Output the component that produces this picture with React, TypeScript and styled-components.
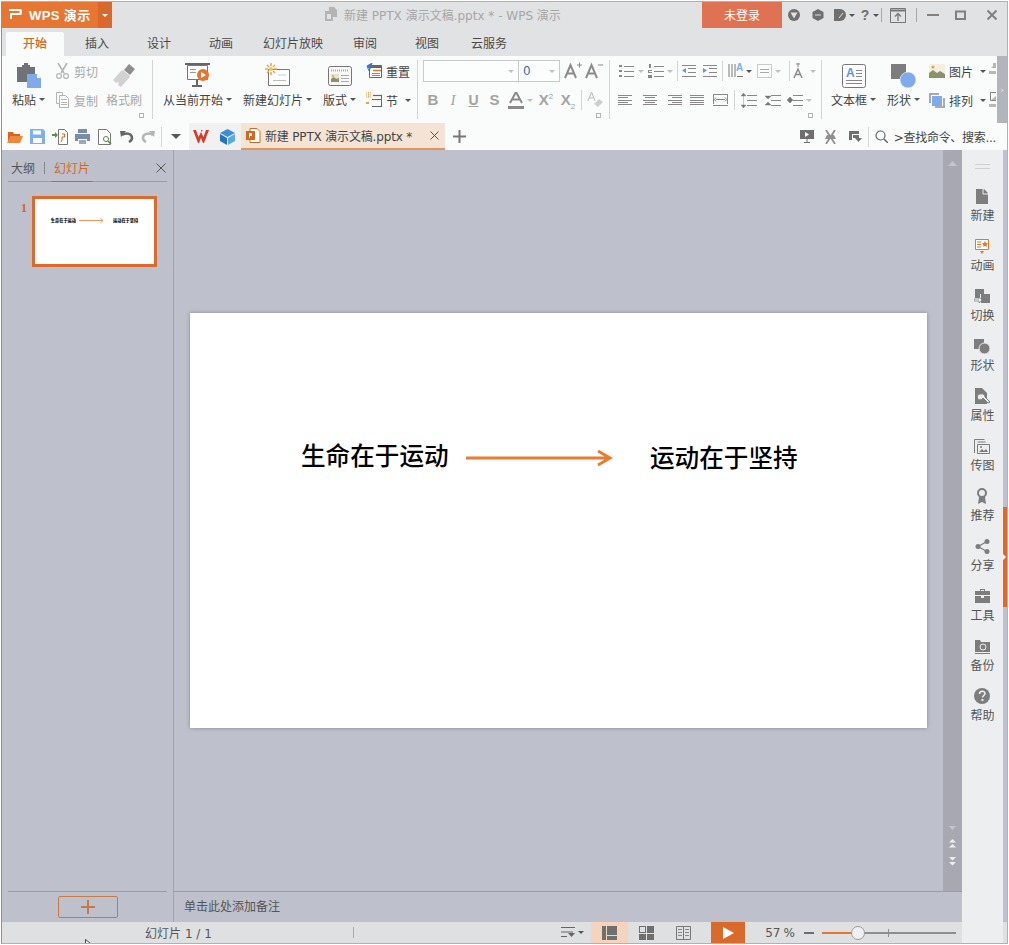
// App.tsx
import React from 'react';
import styled, { createGlobalStyle } from 'styled-components';

const GRAY = '#7d7d7d';
const LIGHT = '#b4b4b4';
const BLUE = '#7fabec';
const ORANGE = '#e5752f';

const Global = createGlobalStyle`
  html, body { margin: 0; padding: 0; background: #fff; }
  body { font-family: "DejaVu Sans", "Noto Sans CJK SC", sans-serif; font-size: 12px; color: #444; }
  svg { display: block; flex: none; }
`;

const Window = styled.div`
  position: relative;
  width: 1007px;
  height: 943px;
  margin: 1px 0 0 1px;
  border: 1px solid #b0b1b3;
  border-left-color: #8f9096;
  box-sizing: border-box;
  display: flex;
  flex-direction: column;
  overflow: hidden;
  background: #e1e2e4;
`;

/* title bar */
const TitleBar = styled.div`
  height: 26px;
  display: flex;
  align-items: stretch;
  flex: none;
`;
const AppButton = styled.div`
  width: 96px;
  background: #e67632;
  color: #fff;
  display: flex;
  align-items: center;
  gap: 6px;
  padding: 0 0 2px 7px;
  box-sizing: border-box;
  font-size: 13px;
  font-weight: 700;
  font-family: "Liberation Sans", "Noto Sans CJK SC", sans-serif;
  letter-spacing: 0.4px;
`;
const AppDrop = styled.div`
  width: 14px;
  background: #d8682b;
  display: flex;
  align-items: center;
  justify-content: center;
`;
const DocTitle = styled.div`
  display: flex;
  align-items: center;
  gap: 6px;
  margin-left: 212px;
  width: 378px;
  padding-bottom: 2px;
  box-sizing: border-box;
  color: #a6a6a6;
  font-size: 12px;
  white-space: nowrap;
`;
const LoginButton = styled.div`
  width: 80px;
  background: #df7252;
  color: #fff;
  display: flex;
  align-items: center;
  justify-content: center;
  padding-bottom: 1px;
  box-sizing: border-box;
  font-size: 12px;
`;
const WinControls = styled.div`
  display: flex;
  align-items: center;
  padding-left: 6px;
`;
const WinSep = styled.div<{ $l: number; $r: number }>`
  width: 1px;
  height: 14px;
  background: #a9a9a9;
  margin: 0 ${p => p.$r}px 0 ${p => p.$l}px;
`;
const HelpMark = styled.span`
  width: 10px;
  text-align: center;
  font-family: "Liberation Sans", sans-serif;
  font-weight: 700;
  font-size: 14px;
  color: #6f6f6f;
`;

/* tabs */
const TabBar = styled.div`
  height: 28px;
  flex: none;
  display: flex;
  align-items: flex-end;
  padding-left: 4px;
`;
const Tab = styled.div<{ $w: number; $active?: boolean }>`
  width: ${p => p.$w}px;
  height: 24px;
  padding-bottom: 3px;
  box-sizing: border-box;
  margin-right: ${p => (p.$active ? 2 : 0)}px;
  display: flex;
  align-items: center;
  justify-content: center;
  color: ${p => (p.$active ? '#d9651f' : '#4a4a4a')};
  font-weight: ${p => (p.$active ? 500 : 400)};
  background: ${p => (p.$active ? '#fafcfb' : 'transparent')};
  border-top-left-radius: 2px;
  border-top-right-radius: 2px;
`;

/* ribbon */
const Ribbon = styled.div`
  height: 67px;
  flex: none;
  background: #fafcfb;
  display: flex;
  align-items: flex-start;
  padding: 4px 0 0 2px;
  box-sizing: border-box;
  position: relative;
`;
const Group = styled.div<{ $w: number }>`
  width: ${p => p.$w}px;
  height: 59px;
  flex: none;
  display: flex;
  box-sizing: border-box;
  position: relative;
  border-right: 1px solid #d3d4d4;
`;
const Launcher = styled.div`
  position: absolute;
  right: 8px;
  bottom: 1px;
  width: 5px;
  height: 5px;
  border: 1px solid #b3b3b3;
  box-sizing: border-box;
`;
const Large = styled.div<{ $w: number }>`
  width: ${p => p.$w}px;
  flex: none;
  display: flex;
  flex-direction: column;
  align-items: center;
  padding-top: 3px;
`;
const LargeIcon = styled.div`
  height: 25px;
  display: flex;
  align-items: center;
`;
const LargeLabel = styled.div<{ $off?: boolean }>`
  margin-top: 2px;
  height: 18px;
  display: flex;
  align-items: center;
  gap: 3px;
  white-space: nowrap;
  color: ${p => (p.$off ? '#a8a8a8' : '#444')};
`;
const SmallColumn = styled.div<{ $w: number; $ml?: number; $clip?: boolean }>`
  width: ${p => p.$w}px;
  margin-left: ${p => p.$ml ?? 0}px;
  flex: none;
  display: flex;
  flex-direction: column;
  gap: 7px;
  overflow: ${p => (p.$clip ? 'hidden' : 'visible')};
`;
const Small = styled.div<{ $off?: boolean }>`
  height: 22px;
  display: flex;
  align-items: center;
  gap: 4px;
  white-space: nowrap;
  color: ${p => (p.$off ? '#a8a8a8' : '#444')};
`;
const Caret = styled.span<{ $off?: boolean; $white?: boolean; $ml?: number; $big?: boolean }>`
  width: 0;
  height: 0;
  flex: none;
  margin-left: ${p => p.$ml ?? 0}px;
  border-left: ${p => (p.$big ? 5 : 3)}px solid transparent;
  border-right: ${p => (p.$big ? 5 : 3)}px solid transparent;
  border-top: ${p => (p.$big ? 5 : 3)}px solid ${p => (p.$white ? '#fff' : p.$off ? '#c0c0c0' : '#555')};
`;
const Stack = styled.div<{ $pl: number }>`
  display: flex;
  flex-direction: column;
  gap: 7px;
  padding-left: ${p => p.$pl}px;
`;
const Row = styled.div`
  height: 22px;
  display: flex;
  align-items: center;
`;
const FontBox = styled.div<{ $w: number; $ml?: number }>`
  width: ${p => p.$w}px;
  height: 22px;
  box-sizing: border-box;
  border: 1px solid #c9c9c9;
  margin-left: ${p => p.$ml ?? 0}px;
  display: flex;
  align-items: center;
  justify-content: flex-end;
  padding-right: 4px;
  background: #fcfdfd;
`;
const BoxValue = styled.span`
  flex: 1;
  padding-left: 4px;
  color: #3f6fa8;
`;
const Glyph = styled.span<{ $w: number; $serif?: boolean; $i?: boolean; $size?: number; $u?: boolean }>`
  width: ${p => p.$w}px;
  flex: none;
  text-align: center;
  font-family: ${p => (p.$serif ? '"Liberation Serif"' : '"Liberation Sans"')}, serif;
  font-weight: ${p => (p.$i ? 400 : 700)};
  font-style: ${p => (p.$i ? 'italic' : 'normal')};
  font-size: ${p => p.$size ?? 14}px;
  text-decoration: ${p => (p.$u ? 'underline' : 'none')};
  color: #a3a3a3;
  line-height: 20px;
  sup, sub { font-size: 8px; line-height: 0; font-weight: 400; }
`;
const ThinSep = styled.div<{ $l: number; $r: number }>`
  width: 1px;
  height: 20px;
  background: #d3d4d4;
  margin: 0 ${p => p.$r}px 0 ${p => p.$l}px;
  flex: none;
`;
const Slot = styled.div<{ $w: number; $ml?: number }>`
  width: ${p => p.$w}px;
  margin-left: ${p => p.$ml ?? 0}px;
  flex: none;
  display: flex;
  justify-content: center;
  align-items: center;
  gap: 3px;
`;
const Spacer = styled.span<{ $w: number }>`
  width: ${p => p.$w}px;
  flex: none;
`;
const CollapseBar = styled.div`
  position: absolute;
  right: 0;
  top: 0;
  bottom: 0;
  width: 10px;
  background: #b3b5bd;
  color: #e9e9ea;
  font-size: 9px;
  display: flex;
  align-items: center;
  justify-content: center;
`;

/* quick bar */
const QuickBar = styled.div`
  height: 27px;
  flex: none;
  background: #fafcfb;
  display: flex;
  align-items: stretch;
  padding-left: 5px;
  position: relative;
`;
const QuickIcons = styled.div`
  width: 154px;
  display: flex;
  align-items: center;
  justify-content: space-between;
  padding-right: 6px;
  box-sizing: border-box;
`;
const QuickSep = styled.div<{ $l?: number; $r?: number }>`
  width: 1px;
  height: 20px;
  align-self: center;
  background: #d5d6d6;
  margin: 0 ${p => p.$r ?? 0}px 0 ${p => p.$l ?? 0}px;
`;
const Mirror = styled.span`
  transform: scaleX(-1);
`;
const DropZone = styled.div`
  width: 27px;
  display: flex;
  align-items: center;
  justify-content: center;
`;
const PinnedTabs = styled.div`
  width: 52px;
  background: #f1f1f1;
  display: flex;
  align-items: center;
  gap: 11px;
  padding-left: 4px;
  box-sizing: border-box;
`;
const DocTab = styled.div`
  width: 204px;
  background: #f5e4d5;
  border-bottom: 2px solid #e9935c;
  box-sizing: border-box;
  display: flex;
  align-items: center;
  padding-left: 5px;
  gap: 4px;
  white-space: nowrap;
  letter-spacing: -0.17px;
  color: #444;
`;
const DocTabClose = styled.span`
  margin-left: auto;
  margin-right: 6px;
`;
const NewTab = styled.div`
  width: 28px;
  display: flex;
  align-items: center;
  justify-content: center;
`;
const QuickRight = styled.div`
  margin-left: auto;
  display: flex;
  align-items: center;
  padding-right: 11px;
  white-space: nowrap;
`;
const SearchText = styled.span`
  margin-left: 6px;
  letter-spacing: -0.3px;
`;

/* main */
const Main = styled.div`
  flex: 1;
  min-height: 0;
  display: flex;
  background: #bec1cb;
  position: relative;
`;
const LeftPanel = styled.div`
  width: 171px;
  flex: none;
  display: flex;
  flex-direction: column;
  border-right: 1px solid #a2a5ad;
  box-sizing: content-box;
`;
const PanelTabs = styled.div`
  height: 32px;
  margin: 0 6px;
  box-sizing: border-box;
  display: flex;
  align-items: center;
  padding-top: 4px;
  border-bottom: 1px solid #9b9da3;
`;
const PanelTab = styled.div<{ $active?: boolean }>`
  height: 100%;
  display: flex;
  align-items: center;
  padding: 0 3px;
  margin-bottom: -1px;
  box-sizing: border-box;
  color: ${p => (p.$active ? '#d9651f' : '#555')};
  border-bottom: 1px solid ${p => (p.$active ? '#d9651f' : 'transparent')};
`;
const PanelDivider = styled.span`
  width: 1px;
  height: 12px;
  margin: 0 6px;
  background: #85878d;
`;
const PanelClose = styled.div`
  margin-left: auto;
  margin-right: 1px;
`;
const ThumbList = styled.div`
  flex: 1;
  padding: 14px 0 0 19px;
  display: flex;
  gap: 6px;
`;
const ThumbNumber = styled.div`
  font-family: "Liberation Serif", serif;
  font-weight: 700;
  font-size: 12px;
  color: #d9651f;
  width: 5px;
  padding-top: 5px;
`;
const Thumb = styled.div`
  width: 125px;
  height: 71px;
  box-sizing: border-box;
  border: 3px solid #dd6a2c;
  background: #fff;
  display: flex;
  align-items: center;
  justify-content: center;
  gap: 3px;
  padding-bottom: 23px;
  font-family: "Noto Sans CJK SC", sans-serif;
  font-size: 4.2px;
  font-weight: 900;
  color: #000;
  white-space: nowrap;
`;
const ThumbRight = styled.span`
  margin-left: 6px;
`;
const AddArea = styled.div`
  height: 31px;
  margin: 0 6px;
  border-top: 1px solid #9b9da3;
  box-sizing: border-box;
  display: flex;
  justify-content: center;
  padding-top: 4px;
`;
const AddButton = styled.div`
  width: 60px;
  height: 22px;
  box-sizing: border-box;
  border: 1px solid #c77a45;
  border-radius: 2px;
  display: flex;
  align-items: center;
  justify-content: center;
`;
const Center = styled.div`
  flex: 1;
  min-width: 0;
  display: flex;
  flex-direction: column;
`;
const EditRow = styled.div`
  flex: 1;
  min-height: 0;
  display: flex;
`;
const Canvas = styled.div`
  flex: 1;
  display: flex;
  align-items: center;
  justify-content: center;
`;
const Slide = styled.div`
  width: 737px;
  height: 415px;
  background: #fff;
  position: relative;
  box-shadow: 0 0 4px rgba(70, 70, 80, 0.45);
`;
const SlideText = styled.div<{ $x: number; $y: number }>`
  position: absolute;
  left: ${p => p.$x}px;
  top: ${p => p.$y}px;
  font-family: "Liberation Serif", "Noto Sans CJK SC", serif;
  font-size: 24.6px;
  line-height: 30px;
  font-weight: 500;
  color: #000;
  white-space: nowrap;
`;
const SlideArrow = styled.div`
  position: absolute;
  left: 276px;
  top: 136px;
`;
const Scrollbar = styled.div`
  width: 19px;
  flex: none;
  background: #a7a8b2;
  display: flex;
  flex-direction: column;
  align-items: center;
  padding: 11px 0 25px;
  box-sizing: border-box;
`;
const ScrollEnd = styled.div`
  margin-top: auto;
  display: flex;
  flex-direction: column;
  align-items: center;
  gap: 9px;
`;
const NotesBar = styled.div`
  height: 31px;
  flex: none;
  border-top: 1px solid #9b9da3;
  box-sizing: border-box;
  display: flex;
  align-items: center;
  padding: 0 0 3px 10px;
  color: #555;
`;

/* right side */
const SideBar = styled.div`
  width: 41px;
  flex: none;
  background: #eceef0;
  display: flex;
  flex-direction: column;
  align-items: center;
  margin-bottom: -22px;
  z-index: 1;
`;
const Grip = styled.div`
  width: 15px;
  height: 3px;
  margin: 14px 0 18px;
  border-top: 1px solid #cfd0d3;
  border-bottom: 1px solid #cfd0d3;
`;
const SideItem = styled.div`
  height: 50px;
  flex: none;
  display: flex;
  flex-direction: column;
  align-items: center;
  color: #555;
  gap: 1px;
`;
const SideIcon = styled.div`
  height: 18px;
  display: flex;
  align-items: center;
`;
const EdgeStrip = styled.div`
  width: 4px;
  flex: none;
  display: flex;
  align-items: center;
`;
const EdgeHandle = styled.div`
  width: 4px;
  height: 100px;
  margin-top: 42px;
  background: #dd6a2c;
  display: flex;
  align-items: center;
`;
const EdgeTick = styled.div`
  width: 0;
  height: 0;
  border-left: 3px solid #fff;
  border-top: 3px solid transparent;
  border-bottom: 3px solid transparent;
`;

/* status */
const StatusBar = styled.div`
  height: 21px;
  flex: none;
  background: #dfe0e2;
  display: flex;
  align-items: stretch;
`;
const SlideCount = styled.div`
  width: 351px;
  display: flex;
  align-items: center;
  justify-content: center;
  padding-left: 2px;
  box-sizing: border-box;
  color: #555;
`;
const StatusSep = styled.div`
  width: 1px;
  height: 11px;
  align-self: center;
  background: #a9a9a9;
`;
const ViewGroup = styled.div`
  margin-left: 207px;
  display: flex;
  align-items: stretch;
`;
const ViewButton = styled.div<{ $w: number; $on?: boolean; $start?: boolean }>`
  width: ${p => p.$w}px;
  display: flex;
  align-items: center;
  justify-content: ${p => (p.$start ? 'flex-start' : 'center')};
  gap: 3px;
  background: ${p => (p.$on ? '#f6d3bd' : 'transparent')};
`;
const PlayButton = styled.div`
  width: 34px;
  margin-left: 9px;
  background: #da6a2c;
  display: flex;
  align-items: center;
  justify-content: center;
`;
const ZoomValue = styled.div`
  width: 59px;
  box-sizing: border-box;
  padding-left: 11px;
  display: flex;
  align-items: center;
  justify-content: center;
  color: #555;
  letter-spacing: -0.3px;
`;
const ZoomControl = styled.div`
  display: flex;
  align-items: center;
`;
const Track = styled.div`
  width: 134px;
  height: 2px;
  margin: 0 6px 0 8px;
  background: #8e8e8e;
  position: relative;
`;
const TrackFill = styled.div`
  height: 100%;
  background: ${ORANGE};
`;
const Knob = styled.div`
  position: absolute;
  top: -6px;
  left: 29px;
  width: 14px;
  height: 14px;
  box-sizing: border-box;
  border: 1px solid #9a9a9a;
  border-radius: 50%;
  background: #eef0f1;
`;
const TrackTick = styled.div`
  position: absolute;
  left: 66px;
  top: -3px;
  width: 1px;
  height: 8px;
  background: #8e8e8e;
`;
const CursorMark = styled.div`
  position: absolute;
  left: 83px;
  bottom: -5px;
  z-index: 3;
`;

/* icons */
type IconProps = { s?: number; w?: number; h?: number; children?: React.ReactNode };
const I: React.FC<IconProps> = ({ s = 16, w, h, children }) => (
  <svg width={w ?? s} height={h ?? s} viewBox={`0 0 ${w ?? s} ${h ?? s}`}>{children}</svg>
);

const Lines = ({ ys, x1, x2, c = GRAY }: { ys: number[]; x1: number; x2: number; c?: string }) => (
  <>{ys.map(y => <path key={y} d={`M${x1} ${y + 0.5}H${x2}`} stroke={c} fill="none" />)}</>
);

const DocIcon = ({ c = LIGHT, s = 14 }: { c?: string; s?: number }) => (
  <I s={s}>
    <path d="M5 0h5l3 3v7H9v4H1V4h4z" fill={c} />
    <path d="M3 7h4v5H3z" fill="#e1e2e4" />
  </I>
);

const Paste = () => (
  <I w={26} h={25}>
    <path d="M1 4h5V2h2V0h4v2h2v2h5v15H1z" fill="#6f7277" />
    <path d="M11 11h10l4 4v10H11z" fill={BLUE} />
    <path d="M21 11l4 4h-4z" fill="#fff" />
  </I>
);
const Cut = () => (
  <I w={15} h={16}>
    <path d="M3 0l6 10M12 0L6 10" stroke={LIGHT} strokeWidth="1.6" fill="none" />
    <circle cx="4" cy="13" r="2.4" stroke={LIGHT} strokeWidth="1.2" fill="none" />
    <circle cx="11" cy="13" r="2.4" stroke={LIGHT} strokeWidth="1.2" fill="none" />
  </I>
);
const Copy = () => (
  <I w={15} h={16}>
    <path d="M1.500 .5h6v3M1.500 .5v11h3" stroke={LIGHT} fill="none" />
    <path d="M4.500 3.500h6l3 3v9h-9z" stroke={LIGHT} fill="#fafcfb" />
    <Lines ys={[7, 10, 12]} x1={6} x2={12} c={LIGHT} />
  </I>
);
const Brush = () => (
  <I w={24} h={24}>
    <path d="M17 0l6 5-5 6-6-5z" fill="#8f8f8f" />
    <path d="M11 6l7 6-1 2-8 9-3-2 1-3-3 1-3-3 8-9z" fill="#d2d2d2" />
  </I>
);
const FromStart = () => (
  <I w={25} h={25}>
    <path d="M0 1h25" stroke="#666" strokeWidth="2" />
    <path d="M2.500 2.500h20v14h-20z" fill="#fff" stroke="#777" />
    <path d="M12 17v5M7 23h10" stroke="#666" strokeWidth="2" fill="none" />
    <Lines ys={[6, 9]} x1={5} x2={11} c="#999" />
    <circle cx="18" cy="12" r="6" fill={ORANGE} />
    <path d="M16 9l5 3-5 3z" fill="#fff" />
  </I>
);
const NewSlide = () => (
  <I w={25} h={25}>
    <path d="M3.500 6.500h21v16h-21z" fill="#fff" stroke="#777" />
    <path d="M8 17.500h13" stroke="#bbb" />
    <path d="M13 12h8" stroke="#ccc" />
    <g stroke="#f2a341" strokeWidth="1.5">
      <path d="M6 0v3M6 9v3M0 6h3M9 6h3M2 2l2 2M8 8l2 2M10 2L8 4M4 8l-2 2" />
    </g>
    <circle cx="6" cy="6" r="2" fill="#f7c24b" />
  </I>
);
const Layout = () => (
  <I w={24} h={20}>
    <rect x=".5" y=".5" width="23" height="19" rx="2" fill="#f8f8f8" stroke="#777" />
    <path d="M3 4.500h18" stroke="#aaa" strokeWidth="2" strokeDasharray="1 1" />
    <path d="M3 8h8v8H3z" fill="#e8e2c8" />
    <path d="M3 16v-3l3-2 2 2 3-1v4z" fill="#8b916f" />
    <circle cx="5" cy="10" r="1" fill="#f0a04a" />
    <Lines ys={[9, 12, 15]} x1={13} x2={21} c="#aaa" />
  </I>
);
const Reset = () => (
  <I w={16} h={16}>
    <path d="M3.500 2.500h12v12h-12z" fill="#fff" stroke="#666" />
    <path d="M3 3h13v2H3z" fill="#666" />
    <path d="M7 7.500h8" stroke={ORANGE} strokeWidth="1.500" />
    <Lines ys={[10, 12]} x1={6} x2={14} c="#888" />
    <path d="M6 0L1 3l3 3zM1 3l2 5" fill="#3d78c7" stroke="#3d78c7" />
  </I>
);
const Section = () => (
  <I w={16} h={16}>
    <path d="M0 1h5M0 3h5M0 5h5M2.500 0v6" stroke="#f0a04a" strokeDasharray="1 1" />
    <path d="M6 7.500h10M6 14.500h10" stroke="#666" strokeWidth="1.200" />
    <path d="M15.500 3v12" stroke="#666" />
    <path d="M7 3.500h9" stroke="#666" strokeWidth="1.200" />
    <path d="M0 10h3v2H0z" fill="#f0a04a" />
  </I>
);
const AUp = ({ sign }: { sign: string }) => (
  <I w={18} h={18}>
    <path d="M1 16L6.500 3 12 16M3.500 11.500h6" stroke="#8a8a8a" strokeWidth="2" fill="none" />
    <path d={sign} stroke="#8a8a8a" fill="none" />
  </I>
);
const ColorA = () => (
  <I w={16} h={17}>
    <path d="M2 11L8 0l6 11M4 7.500h8" stroke="#8a8a8a" strokeWidth="2" fill="none" />
    <path d="M0 14h16v3H0z" fill="#8a8a8a" />
  </I>
);
const Erase = () => (
  <I w={17} h={18}>
    <path d="M1 10L4.500 1 8 10M2.500 7h4" stroke="#b8b8b8" fill="none" />
    <path d="M7 13l5-5 4 3-5 5z" fill="#cfcfcf" />
  </I>
);
const Bullets = () => (
  <I w={16} h={14}>
    <Lines ys={[2, 7, 12]} x1={5} x2={15} c="#888" />
    <path d="M0 1h3v2H0zM0 6h3v2H0zM0 11h3v2H0z" fill="#888" />
  </I>
);
const Numbers = () => (
  <I w={16} h={14}>
    <Lines ys={[2, 7, 12]} x1={6} x2={16} c="#888" />
    <path d="M1 0h2v4H1zM0 6h4v1H1v1h3v1H0zM0 11h4v3H0z" fill="#888" />
  </I>
);
const Indent = ({ flip }: { flip?: boolean }) => (
  <I w={14} h={14}>
    <Lines ys={[1, 12]} x1={0} x2={14} c="#888" />
    <Lines ys={[4, 8]} x1={6} x2={14} c="#888" />
    <path d={flip ? 'M0 4l4 2.500L0 9z' : 'M4 4L0 6.500 4 9z'} fill="#6f93c8" />
  </I>
);
const Columns = () => (
  <I w={15} h={16}>
    <path d="M1 1v13M4 1v13M7 1v13" stroke="#777" fill="none" />
    <text x="8" y="8" fontSize="10" fontWeight="700" fill={BLUE} fontFamily="Liberation Sans">A</text>
    <Lines ys={[13]} x1={9} x2={15} c="#777" />
  </I>
);
const Dotted = () => (
  <I w={15} h={14}>
    <path d="M.5 .5h14v13H.5z" stroke="#999" strokeDasharray="1 1" fill="none" />
    <Lines ys={[5, 8]} x1={3} x2={12} c="#aaa" />
  </I>
);
const TextDir = () => (
  <I w={14} h={16}>
    <path d="M1 15L5 6l4 9M2.500 11.500h5" stroke="#888" strokeWidth="1.400" fill="none" />
    <path d="M3 1h4M5 0v4" stroke="#888" />
  </I>
);
const Align = ({ kind }: { kind: 'l' | 'c' | 'r' | 'j' }) => {
  const short = kind === 'j' ? [0, 14] : kind === 'l' ? [0, 10] : kind === 'c' ? [2, 12] : [4, 14];
  return (
    <I w={14} h={12}>
      <Lines ys={[1, 6, 10]} x1={0} x2={14} c="#888" />
      <Lines ys={[3, 8]} x1={short[0]} x2={short[1]} c="#888" />
    </I>
  );
};
const Distributed = () => (
  <I w={15} h={12}>
    <Lines ys={[0, 11]} x1={0} x2={15} c="#888" />
    <path d="M.5 1v9M14.500 1v9M3 5.500h9" stroke="#888" fill="none" />
    <path d="M3 3.500L1.500 5.500 3 7.500M12 3.500l1.500 2-1.500 2" stroke="#888" fill="none" />
  </I>
);
const LineSpace = ({ dir }: { dir: number }) => (
  <I w={16} h={15}>
    <Lines ys={[2, 7, 12]} x1={6} x2={16} c="#888" />
    <path d={dir === 1 ? 'M2.500 0L0 3h5zM2.500 15L0 12h5zM2.500 3v9' : dir === 2 ? 'M3 6L0 3h6zM3 9l-3 3h6z' : 'M0 7l3-3v6zM6 7L3 4v6z'} fill="#777" stroke="#777" strokeWidth=".4" />
  </I>
);
const TextBox = () => (
  <I w={24} h={24}>
    <rect x=".5" y=".5" width="23" height="23" rx="2" fill="#fff" stroke="#777" />
    <text x="4" y="13" fontSize="12" fontWeight="700" fill="#5d92e2" fontFamily="Liberation Sans">A</text>
    <Lines ys={[6, 9, 12]} x1={14} x2={20} c="#888" />
    <Lines ys={[16, 19]} x1={4} x2={20} c="#888" />
  </I>
);
const Shape = () => (
  <I w={25} h={24}>
    <path d="M0 0h15v15H0z" fill="#7d7d7d" />
    <circle cx="17" cy="16" r="8" fill={BLUE} stroke="#fafcfb" strokeWidth=".6" />
  </I>
);
const Picture = () => (
  <I w={16} h={14}>
    <path d="M0 0h16v14H0z" fill="#f3f0e3" />
    <path d="M0 14V9l4-3 4 3 3-2 5 3v4z" fill="#8b916f" />
    <circle cx="4" cy="3" r="1.600" fill="#f0a04a" />
  </I>
);
const Arrange = () => (
  <I w={16} h={15}>
    <path d="M0 0h10v2H2v8H0z" fill="#aaa" />
    <path d="M3 3h10v10H3z" fill={BLUE} />
    <path d="M14 5h2v10H6v-2h8z" fill="#aaa" />
  </I>
);
const ClippedTop = () => (
  <I w={8} h={16}>
    <path d="M4 0h3v5H2l2-2zM0 8h7v3H0z" fill="#b8b8b8" />
  </I>
);
const ClippedBottom = () => (
  <I w={8} h={16}>
    <path d="M1.500 .5h6v8h-6z" fill="none" stroke="#888" />
    <path d="M2 8l5-4v4zM0 12h7v3H0z" fill="#b8b8b8" />
  </I>
);

const OpenIcon = () => (
  <I w={16} h={14}>
    <path d="M1 2h5l1 2h6v2H4L1 12z" fill="#d9651f" />
    <path d="M4 6h12l-3 7H0z" fill="#f0883a" />
  </I>
);
const SaveIcon = () => (
  <I w={15} h={15}>
    <path d="M0 0h13l2 2v13H0z" fill="#7fb0ee" />
    <path d="M3 1.500h8v4H3zM3 9h9v5H3z" fill="#fafcfb" />
  </I>
);
const SaveAs = () => (
  <I w={16} h={16}>
    <path d="M6.500 .5h6l3 3v12h-9z" fill="#fff" stroke="#777" />
    <path d="M10 5h2.500v3H10v3l-1 2" stroke="#d9651f" fill="none" />
    <path d="M0 5h3V3l3 3-3 3V7H0z" fill="#5e8f3e" />
  </I>
);
const Printer = () => (
  <I w={15} h={15}>
    <path d="M3 0h9v4H3z" fill="#7a8cae" />
    <path d="M0 5h15v7h-3v-2H3v2H0z" fill="#7a8cae" />
    <path d="M4 11h7v4H4z" fill="#9aa7c0" />
  </I>
);
const Preview = () => (
  <I w={15} h={16}>
    <path d="M.5 .5h8l4 4v11H.5z" fill="#fff" stroke="#777" />
    <circle cx="8" cy="10" r="2.500" fill="#fff" stroke="#4f8a3b" />
    <path d="M10 12l3 3" stroke="#4f8a3b" strokeWidth="1.500" />
  </I>
);
const Undo = ({ off }: { off?: boolean }) => (
  <I w={14} h={13}>
    <path d="M2 5c5-3 10-1 10 3 0 2-1 3-3 4" stroke={off ? '#b5b5b5' : '#666'} strokeWidth="2.500" fill="none" />
    <path d="M0 1l6 0-5 6z" fill={off ? '#b5b5b5' : '#666'} />
  </I>
);
const WpsLogo = () => (
  <I w={16} h={13}>
    <path d="M0 0h3l2.500 7L8 2l2.500 5L13 0h3l-5 13H10L8 8l-2 5H5zM8 0l2 0-2 2z" fill="#cf3f2a" />
  </I>
);
const Cube = () => (
  <I w={15} h={16}>
    <path d="M7.500 0L15 4l-7.500 4L0 4z" fill="#3f8fd6" />
    <path d="M0 5l7 4v7l-7-4z" fill="#2672bd" />
    <path d="M15 5L8 9v7l7-4z" fill="#5aa8e4" />
  </I>
);
const PptTab = () => (
  <I w={15} h={15}>
    <path d="M4 .5h7l3 3v11H4z" fill="#fff" stroke="#c96a2a" />
    <path d="M0 3h9v9H0z" fill="#d9651f" />
    <path d="M3 5h3v3H4v2H3z" fill="#fff" />
  </I>
);
const Cross = ({ s = 9, c = '#555', sw = 1 }: { s?: number; c?: string; sw?: number }) => (
  <I s={s}>
    <path d={`M.5 .5L${s - 0.5} ${s - 0.5}M${s - 0.5} .5L.5 ${s - 0.5}`} stroke={c} strokeWidth={sw} />
  </I>
);
const Plus = ({ s = 13, c = '#777', sw = 2 }: { s?: number; c?: string; sw?: number }) => (
  <I s={s}>
    <path d={`M${s / 2} 0V${s}M0 ${s / 2}H${s}`} stroke={c} strokeWidth={sw} />
  </I>
);
const Search = () => (
  <I s={13}>
    <circle cx="5.500" cy="5.500" r="4.500" fill="none" stroke="#666" strokeWidth="1.200" />
    <path d="M9 9l4 4" stroke="#666" strokeWidth="1.500" />
  </I>
);

const sideIcons: Record<string, React.ReactNode> = {
  新建: <I w={12} h={15}><path d="M0 0h7l5 5v10H0z" fill={GRAY} /><path d="M8 0l4 4H8z" fill={GRAY} /><path d="M7 0v5h5" stroke="#eceef0" fill="none" /></I>,
  动画: <I w={14} h={15}><path d="M.5 .5h13v10H.5z" fill="#fff" stroke="#e5752f" /><path d="M2 3h4M2 5.500h4M2 8h4" stroke="#e5752f" /><path d="M10 2l1 2 2 .5-1.500 1.500.3 2L10 7l-1.800 1 .3-2L7 4.500 9 4z" fill="#e5752f" /><path d="M5 12h4l-2 3z" fill="#e5752f" /></I>,
  切换: <I w={16} h={15}><path d="M1 0h9v5H6v4H1z" fill={GRAY} /><path d="M7 5h9v9H7z" fill={GRAY} /><path d="M0 10h5V8l3 3-3 3v-2H0z" fill="#eceef0" stroke={GRAY} strokeWidth=".7" /></I>,
  形状: <I w={16} h={15}><path d="M0 0h10v10H0z" fill={GRAY} /><circle cx="10.500" cy="9.500" r="5.500" fill={GRAY} stroke="#eceef0" /></I>,
  属性: <I w={15} h={16}><path d="M0 0h7l5 5v11H0z" fill={GRAY} /><path d="M6 6a3 3 0 1 0 2 4l5 5 2-1-5-5a3 3 0 0 0-4-3z" fill="#eceef0" stroke={GRAY} /></I>,
  传图: <I w={16} h={15}><path d="M.5 14V.5h10" stroke={GRAY} fill="none" /><path d="M3.500 5.500h12v9h-12zM3.500 3h8" stroke={GRAY} fill="none" /><path d="M5 13l3-3 2 2 2-2 2 3z" fill={GRAY} /><circle cx="7" cy="8" r="1" fill={GRAY} /></I>,
  推荐: <I w={12} h={16}><circle cx="6" cy="5" r="4" fill="none" stroke={GRAY} strokeWidth="2" /><path d="M3 9l-1 7 4-2 4 2-1-7" fill={GRAY} /></I>,
  分享: <I w={15} h={15}><circle cx="12" cy="2.500" r="2.500" fill={GRAY} /><circle cx="12" cy="12.500" r="2.500" fill={GRAY} /><circle cx="3" cy="7.500" r="2.500" fill={GRAY} /><path d="M12 2.500L3 7.500l9 5" stroke={GRAY} strokeWidth="1.200" fill="none" /></I>,
  工具: <I w={15} h={14}><path d="M5 2V0h5v2h5v4H0V2zM6 1v1h3V1z" fill={GRAY} fillRule="evenodd" /><path d="M0 7h6v2h3V7h6v7H0z" fill={GRAY} /></I>,
  备份: <I w={15} h={15}><path d="M0 1h5l1 2h9v10H0z" fill={GRAY} /><circle cx="8" cy="8" r="3" fill="none" stroke="#eceef0" /><path d="M0 14.500h15" stroke={GRAY} /></I>,
  帮助: <I s={16}><circle cx="8" cy="8" r="8" fill={GRAY} /><path d="M5.500 6c0-3.500 5.500-3.500 5.500-.5 0 2-2.500 2-2.500 4" stroke="#eceef0" strokeWidth="1.600" fill="none" /><path d="M7.500 11h2v2h-2z" fill="#eceef0" /></I>,
};

const sideLabels = ['新建', '动画', '切换', '形状', '属性', '传图', '推荐', '分享', '工具', '备份', '帮助'];

const App: React.FC = () => (
  <>
    <Global />
    <Window>
      <TitleBar>
        <AppButton>
          <I w={14} h={12}><path d="M0 1h11a2 2 0 0 1 2 2v2a2 2 0 0 1-2 2H3v4H1V5h9.500V3H0z" fill="#fff" /></I>
          WPS 演示
        </AppButton>
        <AppDrop><Caret $white /></AppDrop>
        <DocTitle><DocIcon />新建 PPTX 演示文稿.pptx * - WPS 演示</DocTitle>
        <LoginButton>未登录</LoginButton>
        <WinControls>
          <Slot $w={12}><I s={12}><circle cx="6" cy="6" r="6" fill="#6f6f6f" /><path d="M2.500 3.500h7L6 9.500z" fill="#e1e2e4" /></I></Slot>
          <Slot $w={12} $ml={12}><I s={12}><path d="M6 0l5.500 3v6L6 12 .5 9V3z" fill="#6f6f6f" /><path d="M3 6h6" stroke="#e1e2e4" /></I></Slot>
          <Slot $w={20} $ml={10}><I s={12}><path d="M0 0h6a6 6 0 0 1 0 12H0z" fill="#6f6f6f" /><path d="M5 9l4-5" stroke="#e1e2e4" /></I><Caret /></Slot>
          <Slot $w={19} $ml={6}><HelpMark>?</HelpMark><Caret /></Slot>
          <WinSep $l={2} $r={8} />
          <I w={16} h={15}><path d="M.5 .5h15v14H.5z" fill="none" stroke="#777" /><path d="M0 2.500h16" stroke="#777" strokeWidth="2" /><path d="M8 13V6M5 8.500L8 5.500l3 3" stroke="#777" fill="none" strokeWidth="1.300" /></I>
          <WinSep $l={10} $r={10} />
          <Slot $w={12}><I w={12} h={3}><path d="M0 0h12v2H0z" fill="#808080" /></I></Slot>
          <Slot $w={11} $ml={16}><I w={11} h={10}><path d="M1 1.500h9v7.500H1z" fill="none" stroke="#808080" strokeWidth="2" /></I></Slot>
          <Slot $w={10} $ml={21}><Cross s={10} c="#808080" sw={2} /></Slot>
        </WinControls>
      </TitleBar>

      <TabBar>
        <Tab $w={58} $active>开始</Tab>
        <Tab $w={62}>插入</Tab>
        <Tab $w={62}>设计</Tab>
        <Tab $w={62}>动画</Tab>
        <Tab $w={82}>幻灯片放映</Tab>
        <Tab $w={62}>审阅</Tab>
        <Tab $w={62}>视图</Tab>
        <Tab $w={62}>云服务</Tab>
      </TabBar>

      <Ribbon>
        <Group $w={149}>
          <Large $w={49}>
            <LargeIcon><Paste /></LargeIcon>
            <LargeLabel>粘贴<Caret /></LargeLabel>
          </Large>
          <SmallColumn $w={49} $ml={2}>
            <Small $off><Cut />剪切</Small>
            <Small $off><Copy />复制</Small>
          </SmallColumn>
          <Large $w={40}>
            <LargeIcon><Brush /></LargeIcon>
            <LargeLabel $off>格式刷</LargeLabel>
          </Large>
          <Launcher />
        </Group>

        <Large $w={89}>
          <LargeIcon><FromStart /></LargeIcon>
          <LargeLabel>从当前开始<Caret /></LargeLabel>
        </Large>
        <Large $w={71}>
          <LargeIcon><NewSlide /></LargeIcon>
          <LargeLabel>新建幻灯片<Caret /></LargeLabel>
        </Large>
        <Large $w={53}>
          <LargeIcon><Layout /></LargeIcon>
          <LargeLabel>版式<Caret /></LargeLabel>
        </Large>
        <Group $w={52}>
          <SmallColumn $w={50}>
            <Small><Reset />重置</Small>
            <Small><Section />节<Caret $ml={3} /></Small>
          </SmallColumn>
        </Group>

        <Group $w={192}>
          <Stack $pl={5}>
            <Row>
              <FontBox $w={96}><Caret $off /></FontBox>
              <FontBox $w={42} $ml={-1}><BoxValue>0</BoxValue><Caret $off /></FontBox>
              <Slot $w={25}><AUp sign="M13 3h5M15.500 .5v5" /></Slot>
              <Slot $w={17}><AUp sign="M13 3h5" /></Slot>
            </Row>
            <Row>
              <Glyph $w={20} $size={15}>B</Glyph>
              <Glyph $w={20} $size={15} $serif $i>I</Glyph>
              <Glyph $w={21} $size={14} $u>U</Glyph>
              <Glyph $w={21} $size={15}>S</Glyph>
              <Slot $w={30}><ColorA /><Caret $off /></Slot>
              <Glyph $w={22} $size={15}>X<sup>2</sup></Glyph>
              <Glyph $w={22} $size={15}>X<sub>2</sub></Glyph>
              <ThinSep $l={2} $r={2} />
              <Slot $w={22}><Erase /></Slot>
            </Row>
          </Stack>
          <Launcher />
        </Group>

        <Group $w={212}>
          <Stack $pl={8}>
            <Row>
              <Slot $w={26}><Bullets /><Caret $off /></Slot>
              <Slot $w={26} $ml={3}><Numbers /><Caret $off /></Slot>
              <ThinSep $l={4} $r={4} />
              <Slot $w={14}><Indent /></Slot>
              <Slot $w={14} $ml={7}><Indent flip /></Slot>
              <ThinSep $l={5} $r={5} />
              <Slot $w={24}><Columns /><Caret /></Slot>
              <Slot $w={24} $ml={5}><Dotted /><Caret $off /></Slot>
              <ThinSep $l={8} $r={3} />
              <Slot $w={23}><TextDir /><Caret $off /></Slot>
            </Row>
            <Row>
              <Align kind="l" />
              <Spacer $w={11} />
              <Align kind="c" />
              <Spacer $w={11} />
              <Align kind="r" />
              <Spacer $w={8} />
              <Align kind="j" />
              <Spacer $w={9} />
              <Distributed />
              <ThinSep $l={6} $r={6} />
              <LineSpace dir={1} />
              <Spacer $w={8} />
              <LineSpace dir={2} />
              <Spacer $w={6} />
              <LineSpace dir={3} />
              <Caret $off $ml={3} />
            </Row>
          </Stack>
          <Launcher />
        </Group>

        <Large $w={63}>
          <LargeIcon><TextBox /></LargeIcon>
          <LargeLabel>文本框<Caret /></LargeLabel>
        </Large>
        <Large $w={37}>
          <LargeIcon><Shape /></LargeIcon>
          <LargeLabel>形状<Caret /></LargeLabel>
        </Large>
        <SmallColumn $w={60} $ml={7}>
          <Small><Picture />图片<Caret $ml={3} /></Small>
          <Small><Arrange />排列<Caret $ml={3} /></Small>
        </SmallColumn>
        <SmallColumn $w={7} $clip>
          <Small><ClippedTop /></Small>
          <Small><ClippedBottom /></Small>
        </SmallColumn>
        <CollapseBar>›</CollapseBar>
      </Ribbon>

      <QuickBar>
        <QuickIcons>
          <OpenIcon />
          <SaveIcon />
          <SaveAs />
          <Printer />
          <Preview />
          <Undo />
          <Mirror><Undo off /></Mirror>
        </QuickIcons>
        <QuickSep />
        <DropZone><Caret $big /></DropZone>
        <PinnedTabs><WpsLogo /><Cube /></PinnedTabs>
        <DocTab>
          <PptTab />
          新建 PPTX 演示文稿.pptx *
          <DocTabClose><Cross /></DocTabClose>
        </DocTab>
        <NewTab><Plus /></NewTab>
        <QuickRight>
          <I w={14} h={13}><path d="M0 0h14v9H0z" fill="#6f6f6f" /><path d="M5 2l4 2.500L5 7z" fill="#fafcfb" /><path d="M7 9v3M4 12.500h6" stroke="#6f6f6f" /></I>
          <Slot $w={13} $ml={10}><I w={13} h={14}><path d="M2 0l9 14M11 0L2 14" stroke="#8f8f8f" strokeWidth="1.800" /><path d="M3 5h7l2 4H1z" fill="#8f8f8f" /></I></Slot>
          <Slot $w={13} $ml={12}><I w={13} h={12}><path d="M0 0h10v3H3v6H0z" fill="#6f6f6f" /><path d="M4 4h6v3h3l-3.500 4L6 7H4z" fill="#6f6f6f" /></I></Slot>
          <QuickSep $l={6} $r={6} />
          <Search />
          <SearchText>&gt;查找命令、搜索...</SearchText>
        </QuickRight>
      </QuickBar>

      <Main>
        <LeftPanel>
          <PanelTabs>
            <PanelTab>大纲</PanelTab>
            <PanelDivider />
            <PanelTab $active>幻灯片</PanelTab>
            <PanelClose><Cross s={10} /></PanelClose>
          </PanelTabs>
          <ThumbList>
            <ThumbNumber>1</ThumbNumber>
            <Thumb>
              <span>生命在于运动</span>
              <I w={25} h={5}><path d="M0 2.500h24M21.500 .5l2.500 2-2.500 2" stroke="#ee9a5f" fill="none" /></I>
              <ThumbRight>运动在于坚持</ThumbRight>
            </Thumb>
          </ThumbList>
          <AddArea>
            <AddButton><Plus s={14} c="#c77a45" sw={2} /></AddButton>
          </AddArea>
        </LeftPanel>

        <Center>
          <EditRow>
            <Canvas>
              <Slide>
                <SlideText $x={111} $y={129}>生命在于运动</SlideText>
                <SlideArrow>
                  <svg width="147" height="18" viewBox="0 0 147 18">
                    <path d="M0 9h144M132 2l12 7-12 7" stroke="#e87c32" strokeWidth="3" fill="none" />
                  </svg>
                </SlideArrow>
                <SlideText $x={460} $y={131}>运动在于坚持</SlideText>
              </Slide>
            </Canvas>
            <Scrollbar>
              <I w={9} h={5}><path d="M4.500 0L9 5H0z" fill="#c5c6cc" /></I>
              <ScrollEnd>
                <I w={7} h={4}><path d="M0 0h7L3.500 4z" fill="#c5c6cc" /></I>
                <I w={7} h={9}><path d="M3.500 0L7 3.500H0zM3.500 5L7 8.500H0z" fill="#eeeef0" /></I>
                <I w={7} h={9}><path d="M0 0h7L3.500 3.500zM0 5h7L3.500 8.500z" fill="#eeeef0" /></I>
              </ScrollEnd>
            </Scrollbar>
          </EditRow>
          <NotesBar>单击此处添加备注</NotesBar>
        </Center>

        <SideBar>
          <Grip />
          {sideLabels.map(l => (
            <SideItem key={l}>
              <SideIcon>{sideIcons[l]}</SideIcon>
              {l}
            </SideItem>
          ))}
        </SideBar>
        <EdgeStrip><EdgeHandle><EdgeTick /></EdgeHandle></EdgeStrip>
      </Main>

      <StatusBar>
        <SlideCount>幻灯片 1 / 1</SlideCount>
        <StatusSep />
        <ViewGroup>
          <ViewButton $w={30} $start>
            <I w={14} h={11}><path d="M0 .5h14M0 5h12M0 9.500h6" stroke="#666" fill="none" /><path d="M7 6h7l-3.500 4z" fill="#666" /></I>
            <Caret />
          </ViewButton>
          <ViewButton $w={37} $on>
            <I w={15} h={14}><path d="M0 0h4v14H0zM5 0h10v9H5zM5 10h10v4H5z" fill="#6f6f6f" /></I>
          </ViewButton>
          <ViewButton $w={37}>
            <I w={15} h={14}><path d="M0 0h15v14H0z" fill="#6f6f6f" /><path d="M1 1h5v5H1z" fill="#dfe0e2" /><path d="M7 0h1v14H7zM0 7h15v1H0z" fill="#dfe0e2" /></I>
          </ViewButton>
          <ViewButton $w={37}>
            <I w={15} h={14}><path d="M.5 .5h14v13H.5zM7.500 .5v13" fill="none" stroke="#777" /><Lines ys={[3, 6, 9]} x1={2} x2={6} c="#888" /><Lines ys={[3, 6, 9]} x1={9} x2={13} c="#888" /></I>
          </ViewButton>
          <PlayButton><I w={11} h={12}><path d="M0 0l11 6-11 6z" fill="#fff" /></I></PlayButton>
          <ZoomValue>57 %</ZoomValue>
          <ZoomControl>
            <I w={10} h={2}><path d="M0 0h10v2H0z" fill="#6c6c74" /></I>
            <Track>
              <TrackFill style={{ width: `${(29 / 134) * 100}%` }} />
              <Knob />
              <TrackTick />
            </Track>
            <Plus s={10} c="#6c6c74" />
            <Spacer $w={9} />
            <I s={10}><path d="M0 3V0h3M7 0h3v3M10 7v3H7M3 10H0V7" fill="none" stroke="#777" /></I>
          </ZoomControl>
        </ViewGroup>
      </StatusBar>
      <CursorMark>
        <I w={9} h={9}><path d="M.5 .5v8l2-2 1 2.500h2l-1-3h3z" fill="#fff" stroke="#222" strokeWidth=".8" /></I>
      </CursorMark>
    </Window>
  </>
);

export default App;
